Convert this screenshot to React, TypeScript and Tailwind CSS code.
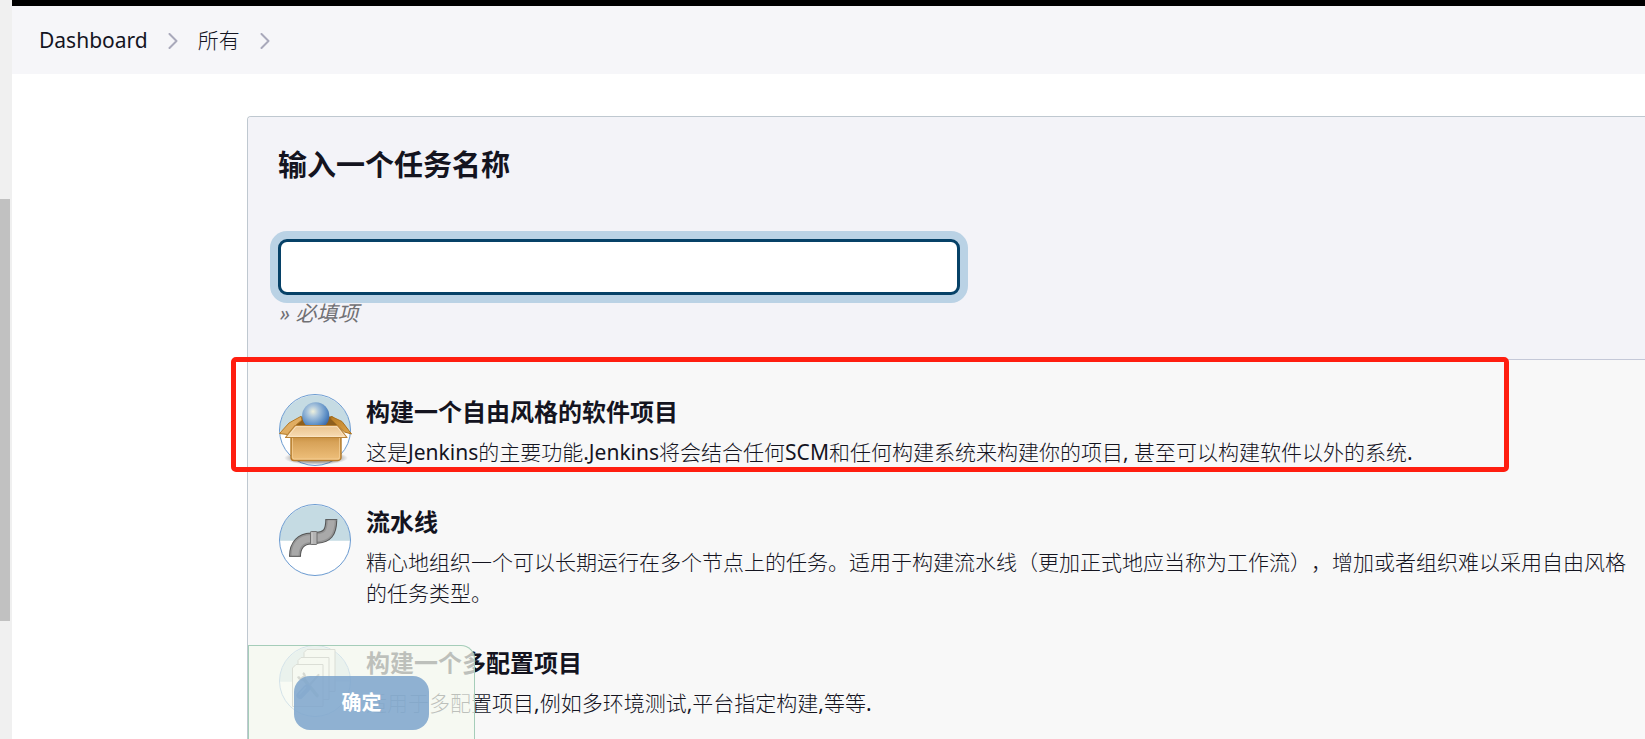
import type { ReactNode } from "react";

function Disc() {
  return (
    <>
      <circle cx="36" cy="36" r="35.5" fill="#fff" />
      <path d="M.5 36.7a35.5 35.5 0 0 1 71 0z" fill="#c5dbe3" />
      <circle cx="36" cy="36" r="35.5" fill="none" stroke="#6b9bd1" />
    </>
  );
}

function BoxIcon() {
  return (
    <svg viewBox="0 0 72 72" className="size-[72px] shrink-0 overflow-visible" aria-hidden="true">
      <defs>
        <linearGradient id="front" x1="0" y1="0" x2="0" y2="1">
          <stop offset="0" stopColor="#c68d3e" />
          <stop offset=".25" stopColor="#d7a258" />
          <stop offset="1" stopColor="#efc07c" />
        </linearGradient>
        <linearGradient id="flap" x1="0" y1="0" x2="0" y2="1">
          <stop offset="0" stopColor="#e9c28d" />
          <stop offset="1" stopColor="#f8dcb4" />
        </linearGradient>
        <linearGradient id="side" x1="0" y1="0" x2="1" y2="1">
          <stop offset="0" stopColor="#b87c22" />
          <stop offset="1" stopColor="#dfa54b" />
        </linearGradient>
        <radialGradient id="ball" cx=".4" cy=".34" r=".66">
          <stop offset="0" stopColor="#eef0dc" />
          <stop offset=".3" stopColor="#adc7dd" />
          <stop offset=".75" stopColor="#5d8fc6" />
          <stop offset="1" stopColor="#3e6cab" />
        </radialGradient>
        <radialGradient id="shade">
          <stop offset="0" stopColor="#000" stopOpacity=".5" />
          <stop offset=".7" stopColor="#000" stopOpacity=".3" />
          <stop offset="1" stopColor="#000" stopOpacity="0" />
        </radialGradient>
      </defs>
      <Disc />
      <ellipse cx="37" cy="64" rx="32" ry="7" fill="url(#shade)" />
      <path d="M22 22.5h32l6 9H15z" fill="#8e5f1d" />
      <path d="M22 22.3 10 29 .5 39.5l8 1L17 31l6-5z" fill="#e0ad62" stroke="#b37a26" strokeWidth="1" />
      <path d="m52 22.3 11 5.2 9.5 12.5-7-2L57 30l-5-5z" fill="url(#side)" stroke="#a9701d" strokeWidth="1" />
      <circle cx="36.7" cy="21.8" r="13.6" fill="url(#ball)" />
      <path d="M12 42h50v21.5a3 3 0 0 1-3 3H15a3 3 0 0 1-3-3z" fill="url(#front)" stroke="#b37a2a" strokeWidth="1.4" />
      <path d="M13.5 44v19a2 2 0 0 0 2 2h43a2 2 0 0 0 2-2V44" fill="none" stroke="#f7d49e" strokeOpacity=".65" />
      <path d="M16 31.5h42.5l9.5 12H6.5z" fill="url(#flap)" stroke="#b98236" strokeWidth="1.2" strokeLinejoin="round" />
      <path d="M17 32.7h41l7.5 9.6H9z" fill="none" stroke="#fdebcf" strokeOpacity=".7" />
    </svg>
  );
}

function PipeIcon() {
  const bend = "M16 52.2C16 40.5 22.5 34.7 32 34.4L38 33.8C48 33 52 29 52.3 16";
  return (
    <svg viewBox="0 0 72 72" className="size-[72px] shrink-0" aria-hidden="true">
      <Disc />
      <path d={bend} fill="none" stroke="#555" strokeWidth="12" />
      <path d={bend} fill="none" stroke="#949494" strokeWidth="10" />
      <path d={bend} fill="none" stroke="#a9a9a9" strokeWidth="7" />
      <path d="M10 52.3h12M46.3 15.6h12" stroke="#555" />
      <rect x="31.5" y="27.5" width="6.5" height="13" rx=".8" fill="#b4b4b4" stroke="#666" strokeWidth=".9" />
      <path d="M33 28.5v11" stroke="#cfcfcf" strokeWidth="1" />
    </svg>
  );
}

function MatrixIcon() {
  return (
    <svg viewBox="0 0 72 72" className="size-[72px] shrink-0" aria-hidden="true">
      <Disc />
      <g fill="#f6f6f4" stroke="#8a8a86">
        <path d="M28 4.5h28v42H25v-39z" />
        <path d="M22 12.5h28v42H19v-39z" />
        <path d="M17 19.5h27v42H13.5V23z" />
      </g>
      <path d="m24 33 14 17.5" stroke="#777" strokeWidth="3.6" strokeLinecap="round" />
      <path d="M19 31.5a5 5 0 0 0 6 2.5 4.5 4.5 0 0 0-1-6" fill="none" stroke="#777" strokeWidth="2.4" />
      <path d="M39.5 30 27 44" stroke="#888" strokeWidth="2.2" strokeLinecap="round" />
      <path d="m28 43-7 7.5" stroke="#1f56a0" strokeWidth="7" strokeLinecap="round" />
      <path d="m26.5 42.5-6 6.5" stroke="#86add8" strokeWidth="1.6" strokeLinecap="round" />
    </svg>
  );
}

function Chevron() {
  return (
    <svg viewBox="0 0 10 16" className="h-4 w-[10px]" fill="none" stroke="#a9a9bb" strokeWidth="2" strokeLinecap="round" strokeLinejoin="round" aria-hidden="true">
      <path d="m1.5 1 7 7-7 7" />
    </svg>
  );
}

function JobType({ icon, title, children, marked }: { icon: ReactNode; title: string; children: ReactNode; marked?: boolean }) {
  return (
    <li className="relative flex gap-[15px] pb-9 pl-[31px] pr-2">
      {icon}
      <div className="min-w-0 flex-1 pt-px">
        <h3 className="text-2xl/[34px] font-bold">{title}</h3>
        <p className="mt-2 font-['Noto_Sans','Noto_Sans_CJK_SC_Light','Noto_Sans_CJK_SC',sans-serif] text-[21px]/[31px]">{children}</p>
      </div>
      {marked && (
        <div className="pointer-events-none absolute -left-[17px] -top-[37px] bottom-8 right-[136px] rounded-[5px] border-[5px] border-[#ff1e10]" />
      )}
    </li>
  );
}

export default function App() {
  return (
    <div className="flex h-screen overflow-hidden bg-white font-['Noto_Sans','Noto_Sans_CJK_SC',sans-serif] text-[#14141f] [text-spacing-trim:space-all]">
      <div className="w-3 shrink-0 bg-[#f0f0f0] pt-[199px]">
        <div className="h-[422px] w-[10px] bg-[#c1c1c1]" />
      </div>
      <div className="flex min-w-0 flex-1 flex-col">
        <header>
          <div className="h-[6px] bg-black" />
          <nav aria-label="breadcrumb" className="flex h-[68px] items-center gap-5 bg-[#f6f6f9] px-[27px] pt-[2px] font-['Noto_Sans','Noto_Sans_CJK_SC_Light','Noto_Sans_CJK_SC',sans-serif] text-[21px]">
            <a href="#dashboard">Dashboard</a>
            <Chevron />
            <a href="#all">所有</a>
            <Chevron />
          </nav>
        </header>
        <main className="flex min-h-0 flex-1 pl-[235px] pt-[42px]">
          <form className="relative flex min-w-0 flex-1 flex-col rounded-tl-[4px] border-l border-t border-[#bfc8d0] bg-[#f8f8f8]">
            <div className="h-[243px] shrink-0 rounded-tl-[3px] border-b border-[#c4c8d8] bg-[#f3f3f8] pl-[30px] pt-7">
              <label htmlFor="name" className="block text-[29px]/[40px] font-bold">输入一个任务名称</label>
              <input
                id="name"
                type="text"
                className="mt-[54px] block h-14 w-[682px] rounded-[9px] border-[3px] border-[#064167] bg-white px-3 text-[21px] shadow-[0_0_0_8px_#bad2e5] outline-none"
              />
              <p className="mt-[3px] pl-[2px] text-[21px]/[31px] italic text-[#707074]">» 必填项</p>
            </div>
            <ul className="min-h-0 flex-1 pt-[34px]">
              <JobType icon={<BoxIcon />} title="构建一个自由风格的软件项目" marked>
                这是Jenkins的主要功能.Jenkins将会结合任何SCM和任何构建系统来构建你的项目, 甚至可以构建软件以外的系统.
              </JobType>
              <JobType icon={<PipeIcon />} title="流水线">
                精心地组织一个可以长期运行在多个节点上的任务。适用于构建流水线（更加正式地应当称为工作流），增加或者组织难以采用自由风格的任务类型。
              </JobType>
              <JobType icon={<MatrixIcon />} title="构建一个多配置项目">
                适用于多配置项目,例如多环境测试,平台指定构建,等等.
              </JobType>
            </ul>
            <div className="absolute bottom-0 left-0 rounded-tr-[14px] border-l border-r border-t border-[#a5cdb9] bg-[#f5f9f0]/75 px-[45px] pb-[9px] pt-[30px]">
              <button type="button" className="h-[54px] w-[135px] rounded-2xl bg-[#7ca4cd]/85 text-xl font-bold text-white">
                确定
              </button>
            </div>
          </form>
        </main>
      </div>
    </div>
  );
}
